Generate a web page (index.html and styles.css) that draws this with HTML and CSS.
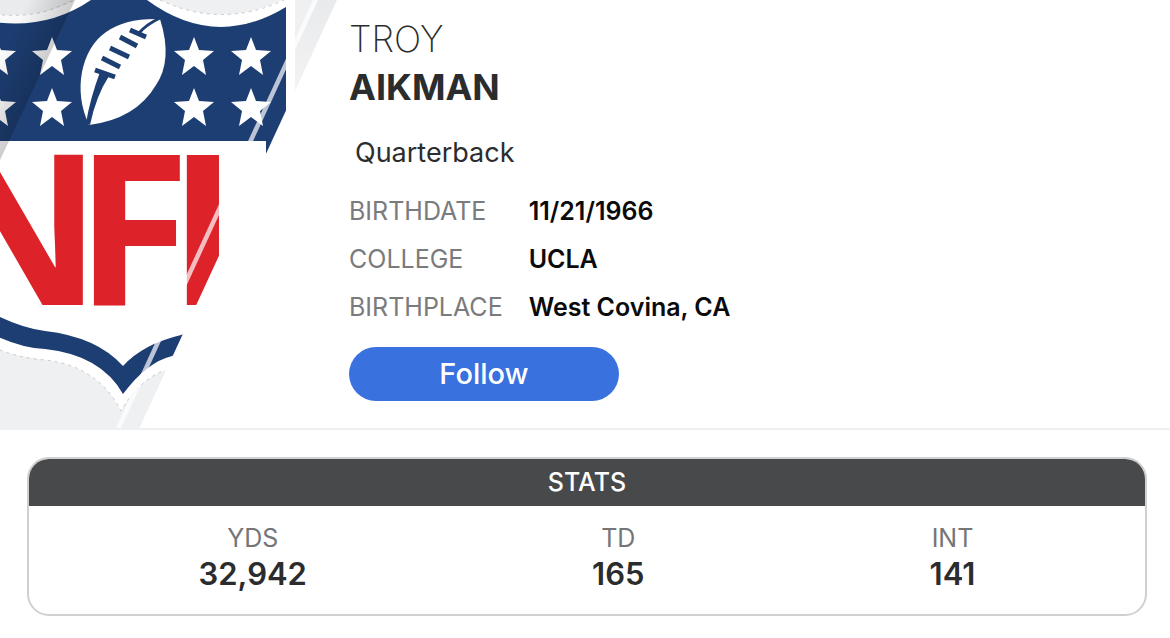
FILE: index.html
```html
<!DOCTYPE html>
<html lang="en">
<head>
<meta charset="utf-8">
<meta name="viewport" content="width=device-width, initial-scale=1">
<title>Troy Aikman</title>
<link rel="stylesheet" href="styles.css">
</head>
<body>
<main>
  <header class="player">
    <svg class="emblem" viewBox="0 0 340 428" role="img" aria-label="NFL">
      <defs>
        <clipPath id="corner"><path d="M0 0H75L0 160Z"/></clipPath>
        <linearGradient id="shade" gradientUnits="userSpaceOnUse" x1="0" y1="60" x2="43" y2="80">
          <stop offset="0" stop-color="#000" stop-opacity=".02"/>
          <stop offset="1" stop-color="#000" stop-opacity=".22"/>
        </linearGradient>
        <linearGradient id="sheen" x1="0" y1="0" x2="0" y2="1">
          <stop offset="0" stop-color="#e9eaec"/>
          <stop offset="1" stop-color="#f3f3f4"/>
        </linearGradient>
        <path id="star" d="M0-19 5-6 20-5 9 4 12 19 0 10-12 19-9 4-20-5-5-6Z"/>
      </defs>
      <rect width="340" height="428" fill="#eff0f2"/>
      <path fill="#fff" d="M-60 0Q20 30 75 0H160Q222 29 282 0H295V180Q292 330 163 371Q138 381 121 411Q98 366 45 360Q16 357-10 347Z"/>
      <path fill="#1d3e73" d="M-30 17Q38 36 91 0H147Q215 50 286 7V180Q283 330 172 356Q147 362 123 394Q101 355 45 349Q20 348-10 333Z"/>
      <path fill="#fff" d="M-10 141H266V180Q266 310 181 335Q143 344 123 366Q97 337 45 331Q20 328-10 312Z"/>
      <path d="M-5 14Q24 18 50 10L75 0M160 0Q222 29 284 0M0 350Q20 358 45 360Q98 366 121 411Q138 381 163 371" fill="none" stroke="#c6c8cb" stroke-dasharray="3 4"/>
      <g fill="#fff">
        <use href="#star" x="-4" y="56"/><use href="#star" x="52" y="56"/>
        <use href="#star" x="-4" y="107"/><use href="#star" x="52" y="107"/>
        <use href="#star" x="194" y="56"/><use href="#star" x="251" y="56"/>
        <use href="#star" x="194" y="107"/><use href="#star" x="251" y="107"/>
        <path d="M160 19Q173 60 156 85Q136 119 89 125Q77 99 82 72Q93 17 160 19Z"/>
      </g>
      <g fill="none" stroke="#1d3e73">
        <path stroke-width="3" d="M160 18Q147 24 139 33"/>
        <path stroke-width="5" d="M130 30 146 37M120 37 137 46M110 48 129 57M102 58 120 67M95 70 115 77"/>
      </g>
      <path fill="#1d3e73" d="M100 72 109 76Q96 96 90 125L86 123Q90 99 100 72Z"/>
      <g class="monogram">
        <text x="-69" y="305">N</text>
        <text x="75" y="305">F</text>
        <text x="169" y="305">L</text>
      </g>
      <path clip-path="url(#corner)" fill="url(#shade)" d="M0 0H75V160H0Z"/>
      <path fill="url(#sheen)" d="M318 0H337L295 91V50Z"/>
      <path fill="#fff" fill-opacity=".7" d="M313 0H318L121 428H116Z"/>
      <path fill="#fff" d="M337 0H341V429H139Z"/>
    </svg>
    <section class="profile">
      <h1><span class="first">TROY</span><span class="last">AIKMAN</span></h1>
      <p class="position">Quarterback</p>
      <dl class="facts">
        <dt>BIRTHDATE</dt><dd>11/21/1966</dd>
        <dt>COLLEGE</dt><dd>UCLA</dd>
        <dt>BIRTHPLACE</dt><dd>West Covina, CA</dd>
      </dl>
      <button class="follow" type="button">Follow</button>
    </section>
  </header>
  <section class="stats">
    <h2>STATS</h2>
    <dl class="totals">
      <div><dt>YDS</dt><dd>32,942</dd></div>
      <div><dt>TD</dt><dd>165</dd></div>
      <div><dt>INT</dt><dd>141</dd></div>
    </dl>
  </section>
</main>
</body>
</html>
```
FILE: styles.css
```css
* { box-sizing: border-box; }
body, h1, h2, p, dl, dd { margin: 0; }
body {
  background: #fff;
  color: #2b2c2d;
  font-family: Inter, "Liberation Sans", sans-serif;
}
.player {
  display: flex;
  align-items: flex-start;
  border-bottom: 2px solid #eff0f2;
}
.emblem {
  display: block;
  flex: none;
  width: 340px;
}
.monogram {
  fill: #dd2229;
  font-family: "Noto Sans", "Open Sans", sans-serif;
  font-size: 210px;
  font-weight: 700;
}
.profile { padding: 15px 16px 24px 9px; }
h1 { font-size: 36px; line-height: 48px; }
h1 span { display: block; }
.first { font-weight: 200; }
.last { font-weight: 700; }
.position {
  margin-top: 26px;
  padding-left: 6px;
  font-size: 27px;
  line-height: 32px;
}
.facts {
  display: grid;
  grid-template-columns: max-content auto;
  column-gap: 26px;
  margin-top: 18px;
  font-size: 25px;
  line-height: 48px;
}
.facts dt { color: #7a7b7d; }
.facts dd { color: #0b0b0c; font-weight: 600; }
.follow {
  display: block;
  width: 270px;
  height: 54px;
  margin-top: 16px;
  border: 0;
  border-radius: 27px;
  background: #3971df;
  color: #fff;
  font: 500 29px/52px Inter, "Liberation Sans", sans-serif;
}
.stats {
  margin: 27px 23px 0 27px;
  border: 2px solid #cfd0d1;
  border-radius: 22px;
  overflow: hidden;
}
h2 {
  background: #48494b;
  color: #fff;
  font-size: 25px;
  font-weight: 500;
  line-height: 47px;
  text-align: center;
}
.totals {
  display: flex;
  justify-content: space-around;
  padding: 16px 27px 20px;
  text-align: center;
}
.totals dt { color: #747577; font-size: 25px; line-height: 32px; }
.totals dd { font-size: 31px; font-weight: 600; line-height: 40px; }
```
